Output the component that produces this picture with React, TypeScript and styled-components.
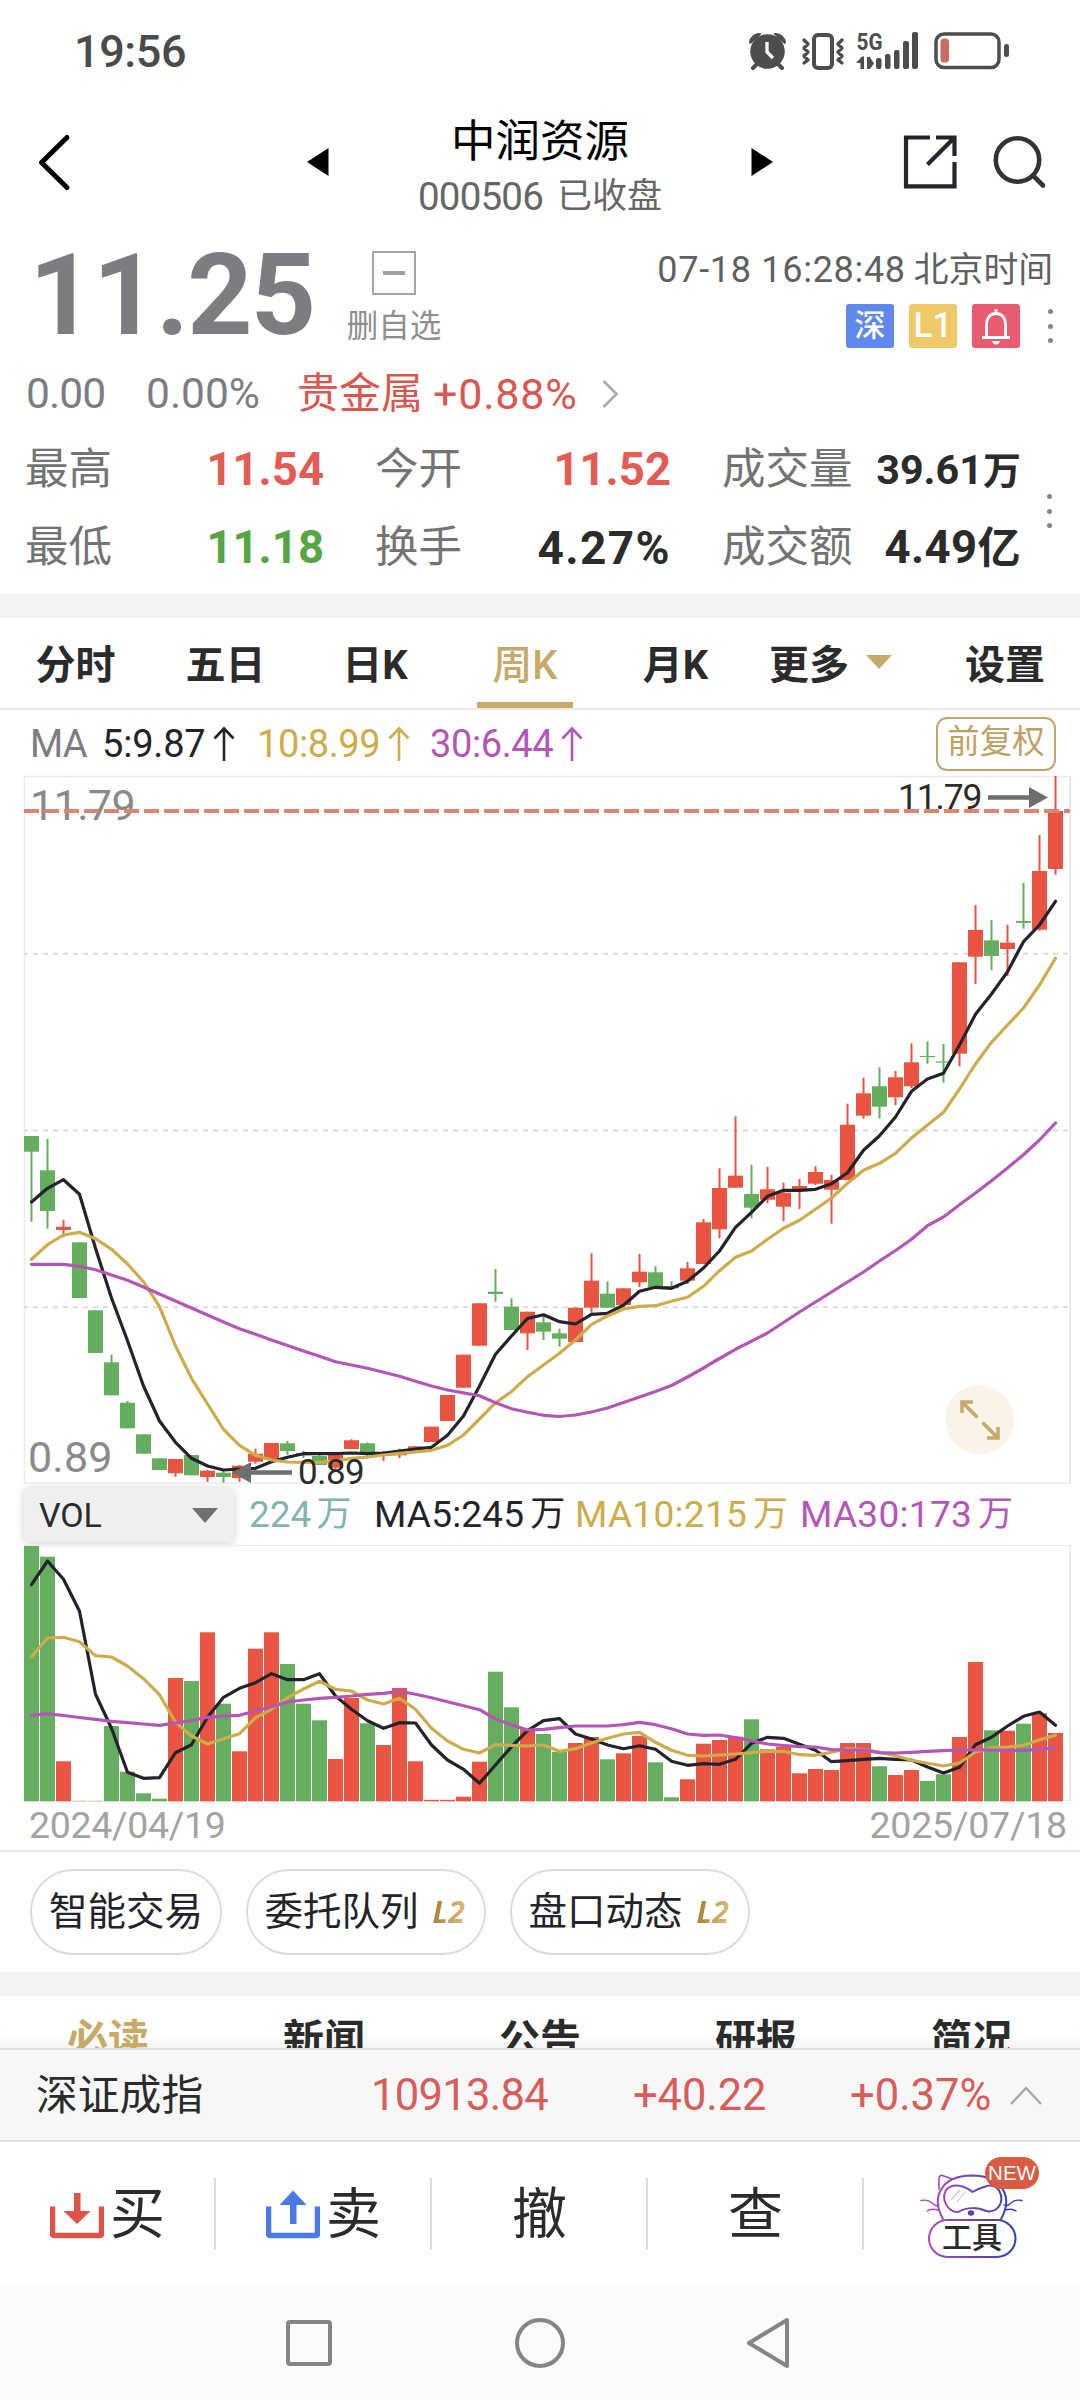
import React from "react";
import styled, { createGlobalStyle, css } from "styled-components";

const Global = createGlobalStyle`
  * { box-sizing: border-box; }
  html, body { margin: 0; padding: 0; background: #fff; }
  body { font-family: Roboto, "Noto Sans CJK SC", sans-serif; }
  svg { display: block; flex: none; }
`;

const RED = "#e95540";
const GREEN = "#65ad5f";
const INK = "#23242b";
const GOLD = "#c9a968";
const MA10 = "#ceac4c";
const MA30 = "#b456b8";

const Screen = styled.main`
  width: 1080px;
  height: 2400px;
  overflow: hidden;
  background: #fff;
  display: flex;
  flex-direction: column;
`;

type TextProps = { $s: number; $c?: string; $w?: number; $ls?: number; $ml?: number; $mt?: number; $width?: number };
const Text = styled.span<TextProps>`
  display: block;
  flex: none;
  white-space: pre;
  font-size: ${(p) => p.$s}px;
  color: ${(p) => p.$c || "#2b2b2b"};
  font-weight: ${(p) => p.$w || 400};
  letter-spacing: ${(p) => p.$ls || 0}px;
  margin-left: ${(p) => p.$ml || 0}px;
  margin-top: ${(p) => p.$mt || 0}px;
  ${(p) => p.$width && css`width: ${p.$width}px;`}
`;

/* ---------- status bar ---------- */
const StatusBar = styled.header`
  height: 102px;
  display: flex;
  justify-content: space-between;
  line-height: 103px;
  padding: 0 60px 0 74px;
`;

/* ---------- title bar ---------- */
const TitleBar = styled.nav`
  height: 126px;
  display: grid;
  grid-template-columns: 300px 480px 300px;
  align-items: stretch;
`;
const TitleSide = styled.div<{ $end?: boolean }>`
  display: flex;
  align-items: flex-start;
  justify-content: ${(p) => (p.$end ? "flex-end" : "flex-start")};
  padding: ${(p) => (p.$end ? "31px 32px 0 0" : "31px 0 0 36px")};
  gap: 34px;
`;
const TitleMid = styled.div`
  display: flex;
  justify-content: space-between;
  padding: 0 7px;
  svg { margin-top: 46px; }
`;
const TitleText = styled.div`
  display: flex;
  flex-direction: column;
  align-items: center;
  padding-top: 12px;
`;
const TitleName = styled.h1`
  margin: 0;
  font-size: 44.5px;
  line-height: 56px;
  font-weight: 400;
  color: #000;
`;
const TitleSub = styled.div`
  display: flex;
  align-items: center;
  line-height: 54px;
`;

/* ---------- quote ---------- */
const QuoteTop = styled.section`
  height: 132px;
  display: flex;
`;
const Price = styled.strong`
  width: 330px;
  padding-left: 29px;
  font-size: 114px;
  line-height: 135px;
  font-weight: 700;
  color: #7c7d82;
  letter-spacing: -1.9px;
`;
const Favorite = styled.div`
  width: 128px;
  display: flex;
  flex-direction: column;
  align-items: center;
  padding-top: 23px;
`;
const MinusBox = styled.div`
  width: 44px;
  height: 44px;
  border: 2px solid #a6a6a6;
  display: flex;
  align-items: center;
  justify-content: center;
  &::before { content: ""; width: 22px; height: 4px; background: #a0a0a0; }
`;
const QuoteRight = styled.div`
  flex: 1;
  display: flex;
  flex-direction: column;
  align-items: flex-end;
  padding: 22px 27px 0 0;
`;
const TimeRow = styled.div`
  display: flex;
  line-height: 41px;
  height: 54px;
`;
const Badges = styled.div`
  display: flex;
  align-items: center;
  gap: 15px;
`;
const Badge = styled.span<{ $bg: string; $size: number }>`
  width: 48px;
  height: 44px;
  border-radius: 3px;
  background: ${(p) => p.$bg};
  color: #fff;
  display: flex;
  align-items: center;
  justify-content: center;
  font-size: ${(p) => p.$size}px;
  line-height: 42px;
  font-weight: 500;
`;
const Dots = styled.span<{ $ml?: number }>`
  width: 5px;
  margin-left: ${(p) => p.$ml || 0}px;
  display: flex;
  flex-direction: column;
  gap: 9.5px;
  i { width: 5px; height: 5px; border-radius: 50%; background: #858585; }
`;
const ChangeRow = styled.section`
  height: 68px;
  line-height: 68px;
  display: flex;
  align-items: center;
  padding-left: 26px;
`;
const Stats = styled.section`
  height: 166px;
  display: flex;
  justify-content: space-between;
  padding: 3px 28px 0 25px;
`;
const StatGrid = styled.div`
  display: grid;
  grid-template-columns: 299px 296px 299px;
  grid-template-rows: 78px 78px;
  column-gap: 51px;
`;
const Stat = styled.div`
  display: flex;
  justify-content: space-between;
  align-items: center;
  line-height: 78px;
`;
const StatSide = styled.div`
  padding-top: 63px;
`;
const Band = styled.div`
  height: 24px;
  flex: none;
  background: #f3f3f5;
`;

/* ---------- period tabs ---------- */
const Tabs = styled.nav`
  height: 92px;
  flex: none;
  border-bottom: 2px solid #e9e9e9;
  display: grid;
  grid-template-columns: 151px 149px 150px 150px 151px 179px 150px;
`;
const Tab = styled.div<{ $active?: boolean; $start?: boolean }>`
  display: flex;
  align-items: center;
  justify-content: ${(p) => (p.$start ? "flex-start" : "center")};
  padding: 0 0 3px ${(p) => (p.$start ? 18 : 0)}px;
  gap: 17px;
  font-size: 40px;
  font-weight: ${(p) => (p.$active ? 500 : 700)};
  color: ${(p) => (p.$active ? GOLD : "#2b2b2b")};
  background: ${(p) => (p.$active ? `linear-gradient(${GOLD}, ${GOLD}) center bottom / 96px 6px no-repeat` : "none")};
`;
const DownTri = styled.i<{ $c: string; $h: number }>`
  width: 0;
  height: 0;
  border: 13px solid transparent;
  border-bottom: 0;
  border-top: ${(p) => p.$h}px solid ${(p) => p.$c};
`;

/* ---------- chart ---------- */
const MaRow = styled.div`
  height: 64px;
  flex: none;
  display: flex;
  align-items: center;
  padding: 4px 24px 0 30px;
  line-height: 60px;
`;
const MaItem = styled.div<{ $w: number }>`
  display: flex;
  align-items: center;
  width: ${(p) => p.$w}px;
  svg { margin-left: 8px; }
`;
const Adjust = styled.button`
  margin: 0 0 0 auto;
  width: 120px;
  height: 54px;
  padding: 0 0 4px;
  border: 2px solid #c3a56b;
  border-radius: 11px;
  background: #fff;
  color: #c0a065;
  font: 400 32.5px/43px Roboto, "Noto Sans CJK SC", sans-serif;
`;
const ChartWrap = styled.div`
  position: relative;
  flex: none;
  svg { overflow: visible; }
  svg text { font-family: Roboto, sans-serif; }
`;
const Expand = styled.div`
  position: absolute;
  left: 945px;
  top: 611px;
  width: 69px;
  height: 69px;
  border-radius: 50%;
  background: #faf3e8;
  display: flex;
  align-items: center;
  justify-content: center;
`;
const VolRow = styled.div`
  height: 57px;
  flex: none;
  display: flex;
  line-height: 54px;
  padding: 2px 0 0 24px;
`;
const VolSelect = styled.div`
  width: 210px;
  height: 54px;
  flex: none;
  border-radius: 5px;
  background: #efefef;
  box-shadow: 0 1px 8px rgba(0, 0, 0, 0.2);
  display: flex;
  align-items: center;
  justify-content: space-between;
  padding: 0 16px 0 15px;
  margin-right: 15px;
`;
const VolItem = styled.div<{ $w: number; $c: string }>`
  width: ${(p) => p.$w}px;
  flex: none;
  display: flex;
  color: ${(p) => p.$c};
`;
const Dates = styled.div`
  height: 49px;
  flex: none;
  border-bottom: 2px solid #ebebeb;
  display: flex;
  justify-content: space-between;
  line-height: 45px;
  padding: 0 13px 0 29px;
`;

/* ---------- shortcuts ---------- */
const Pills = styled.section`
  height: 120px;
  flex: none;
  display: flex;
  gap: 24px;
  padding: 17px 30px;
`;
const Pill = styled.button<{ $w: number }>`
  width: ${(p) => p.$w}px;
  height: 86px;
  margin: 0;
  padding: 0;
  border: 2px solid #dcdcdc;
  border-radius: 43px;
  background: #fff;
  color: ${INK};
  display: flex;
  align-items: center;
  justify-content: center;
  gap: 14px;
  font: 400 38.5px/80px Roboto, "Noto Sans CJK SC", sans-serif;
`;
const L2 = styled.em`
  font: italic 700 30px/36px "Open Sans", sans-serif;
  background: linear-gradient(100deg, #a8812f 10%, #dcc083 90%);
  -webkit-background-clip: text;
  color: transparent;
  letter-spacing: 0.5px;
  padding-right: 2px;
`;
const NewsTabs = styled.nav`
  height: 52px;
  flex: none;
  overflow: hidden;
  display: grid;
  grid-template-columns: repeat(5, 1fr);
  text-align: center;
  font-size: 41px;
  font-weight: 700;
  line-height: 89px;
  color: #2b2b2b;
  box-shadow: inset 0 -14px 14px -10px rgba(0, 0, 0, 0.06);
`;
const NewsTab = styled.span<{ $active?: boolean }>`
  color: ${(p) => (p.$active ? GOLD : "inherit")};
`;
const IndexBar = styled.section`
  height: 94px;
  flex: none;
  background: #f7f7f7;
  border-top: 2px solid #dfdfdf;
  border-bottom: 2px solid #e0e0e0;
  display: flex;
  align-items: center;
  line-height: 88px;
  padding: 2px 0 0 36px;
`;
const TradeBar = styled.nav`
  height: 144px;
  flex: none;
  display: grid;
  grid-template-columns: repeat(5, 216px);
  align-items: center;
`;
const Trade = styled.div`
  height: 72px;
  display: flex;
  align-items: center;
  justify-content: center;
  gap: 6px;
  color: #2b2b2b;
  font-size: 55px;
  line-height: 76px;
  padding-left: 1px;
  border-right: 2px solid #dedede;
  &:last-child { border: 0; height: 144px; padding-left: 16px; }
`;
const Tool = styled.div`
  position: relative;
  width: 130px;
  height: 120px;
  svg { overflow: visible; }
`;
const ToolLabel = styled.span`
  position: absolute;
  left: 13px;
  top: 65px;
  width: 88px;
  height: 39px;
  text-align: center;
  font-size: 30px;
  line-height: 38px;
  font-weight: 500;
`;
const NewBadge = styled.span`
  position: absolute;
  left: 70px;
  top: 3px;
  width: 54px;
  height: 32px;
  border-radius: 16px;
  background: #d95b42;
  color: #fff;
  text-align: center;
  font: 400 20.5px/32px "Liberation Sans", sans-serif;
`;
const SystemNav = styled.footer`
  flex: 1;
  background: #fbfbfb;
  display: flex;
  justify-content: center;
  align-items: center;
  gap: 175px;
`;

/* ---------- data ---------- */
// colour, body top, body bottom, wick top, wick bottom
type Candle = [string, number, number, number?, number?];
const candles: Candle[] = [
  ["g", 1136, 1151.7, 1136, 1222], ["g", 1170.3, 1211, 1139, 1228.7], ["r", 1226.7, 1230, 1219.7, 1237.3],
  ["g", 1242.3, 1298], ["g", 1310.3, 1353], ["g", 1362.3, 1395.3, 1354.7], ["g", 1402.7, 1428.3, 1401],
  ["g", 1434.3, 1453.7], ["g", 1458.3, 1470], ["r", 1459, 1473.3, 1459, 1476.7], ["g", 1455, 1475.3],
  ["r", 1470.7, 1477, 1470, 1481.7], ["g", 1472.7, 1477, 1470, 1482.7], ["r", 1465.7, 1478, 1465, 1481.7],
  ["r", 1453.7, 1461.7, 1448.7, 1463.7], ["r", 1443, 1459.5], ["g", 1443.3, 1451, 1441, 1454.7],
  ["g", 1453, 1455.3, 1450.7, 1458], ["g", 1456, 1465, 1453], ["r", 1454.7, 1467.7, 1452.7, 1469.3],
  ["r", 1440.3, 1449, 1439.3], ["g", 1443.3, 1454, 1442.3, 1458.5], ["r", 1453.3, 1456, 1451, 1461],
  ["r", 1452.3, 1455.3, 1448.7, 1458], ["r", 1446.3, 1449.3], ["r", 1426.7, 1442], ["r", 1395, 1421],
  ["r", 1354.7, 1387.7], ["r", 1303.3, 1345.7], ["g", 1291.7, 1294, 1269, 1302], ["g", 1306.7, 1330, 1298.3],
  ["r", 1311.7, 1333.3, 1311.7, 1350], ["g", 1322.3, 1331.7, 1316, 1340], ["g", 1333.3, 1338.7, 1328.7, 1346.7],
  ["r", 1307.7, 1342], ["r", 1280.7, 1307.7, 1253.3, 1312.7], ["g", 1293.7, 1307.7, 1281.3],
  ["r", 1288.3, 1305], ["r", 1271.7, 1282.3, 1254, 1287], ["g", 1272.3, 1287.3, 1266],
  ["g", 1286, 1288.3, 1281.3], ["r", 1268.3, 1280.7, 1262, 1284], ["r", 1222.3, 1264, 1219],
  ["r", 1188, 1229.3, 1168.3, 1238.3], ["r", 1175.7, 1187.7, 1116.3], ["g", 1194, 1207.7, 1164.7, 1218.3],
  ["r", 1189.3, 1199.7, 1167, 1203.3], ["r", 1192.7, 1206.7, 1182.7, 1221.3], ["r", 1186, 1190.7, 1179, 1209],
  ["r", 1172, 1183.7, 1166.3, 1185], ["r", 1180, 1189.7, 1175, 1223.7], ["r", 1124.7, 1180, 1103.7],
  ["r", 1093.3, 1115.7, 1077.7, 1118.7], ["g", 1086.3, 1106.7, 1067.3, 1118.7], ["r", 1077.3, 1097.3, 1071, 1105],
  ["r", 1062.3, 1086.3, 1043.3, 1088], ["g", 1055.9, 1057.1, 1041.3, 1063.7], ["g", 1061.4, 1062.6, 1044, 1082.7],
  ["r", 962.3, 1053.7, 962.3, 1066.3], ["r", 930, 956.7, 905, 984], ["g", 940.3, 956, 920, 970],
  ["r", 942.7, 949, 924.7, 976], ["g", 921, 922.9, 883, 928.7], ["r", 871, 929.7, 835, 930.7],
  ["r", 811, 869, 776, 874.7],
];
const ma5 = [1202, 1188.3, 1179.7, 1194.3, 1248.3, 1298, 1340.7, 1386, 1421, 1442.3, 1458.3, 1466, 1470, 1469, 1468.3, 1461.7, 1457.3, 1453.7, 1453.7, 1453.7, 1453, 1453.7, 1453, 1451, 1449, 1447.3, 1435.3, 1416, 1386, 1354.3, 1336, 1318.5, 1314.7, 1321.7, 1324, 1314.3, 1313.3, 1305.3, 1291.3, 1287.3, 1288.3, 1281.3, 1268, 1251, 1227.3, 1212.3, 1196.3, 1190.3, 1190.3, 1189.3, 1183.7, 1172.7, 1150.3, 1135.7, 1117, 1091.3, 1079, 1073.3, 1045, 1014.3, 994, 971.7, 941.7, 925, 901.3];
const ma10 = [1259.3, 1244.7, 1235, 1232.3, 1238.7, 1249.3, 1264, 1281.7, 1306.7, 1346, 1378.3, 1404, 1429.3, 1445.3, 1455.3, 1460, 1462, 1462.3, 1462.3, 1461, 1458.3, 1457, 1455, 1453.3, 1452, 1450.3, 1445.3, 1435, 1419, 1402.7, 1391.7, 1376.7, 1365, 1353.3, 1340, 1324.3, 1316, 1309, 1306.3, 1305.7, 1301.3, 1297.3, 1286.3, 1270.7, 1257.3, 1251, 1239.3, 1228.3, 1220.3, 1209.3, 1198, 1183.3, 1170.3, 1163.3, 1153.3, 1138, 1125, 1112.3, 1089, 1064, 1042.3, 1025, 1008, 985, 958.3];
const ma30 = [1264.3, 1264.3, 1264.3, 1266.3, 1269.7, 1275, 1280.3, 1287, 1294, 1301, 1308, 1315, 1322, 1328.7, 1334.3, 1340, 1345.5, 1351, 1356.3, 1361.7, 1365, 1368.3, 1372.2, 1376.3, 1381.3, 1386, 1390, 1392.8, 1395.7, 1402.7, 1408.7, 1412.3, 1415.3, 1416.5, 1415, 1412, 1408, 1402.5, 1397, 1391.5, 1385.5, 1377, 1368, 1358.5, 1349.3, 1341.3, 1333, 1322.5, 1312, 1302, 1292, 1282, 1272, 1261, 1250.5, 1239.3, 1225.7, 1217, 1204.7, 1193, 1180.7, 1168, 1154.7, 1140, 1123];
const volTop = [1546, 1556.7, 1761.3, 1801, 1801, 1726, 1771.7, 1793.3, 1798.7, 1678, 1681, 1632.3, 1703.7, 1751.3, 1648.7, 1632.3, 1664, 1703.7, 1720.3, 1759, 1698, 1723.3, 1745, 1688, 1761.3, 1799.8, 1799.8, 1796.7, 1761.7, 1671.7, 1707.3, 1729, 1734, 1751.7, 1743, 1737, 1759.3, 1753.3, 1736, 1762.3, 1797.3, 1779.3, 1743.7, 1740, 1736.7, 1719.3, 1749.3, 1746.7, 1773.3, 1769, 1770, 1743, 1743, 1766.3, 1775, 1770, 1781, 1774.3, 1737, 1662, 1730.3, 1730.7, 1723.7, 1713.3, 1733];
const volGreen = new Set([0, 1, 5, 6, 7, 8, 10, 12, 16, 17, 18, 21, 29, 30, 32, 33, 36, 39, 40, 45, 53, 56, 57, 60, 62]);
const vma5 = [1584.7, 1561, 1579.3, 1611.3, 1694.3, 1728.3, 1772.3, 1778.3, 1777.7, 1752.7, 1744.7, 1717.3, 1697.3, 1688.3, 1682.7, 1673.7, 1679.7, 1679.7, 1673.7, 1696, 1709.3, 1720.7, 1728.3, 1722.7, 1723, 1745, 1760, 1769.3, 1783.3, 1765, 1746.7, 1730.7, 1720.7, 1718.7, 1734, 1739, 1745, 1748.7, 1745.7, 1749.3, 1761.3, 1765.3, 1763.7, 1764.3, 1759.3, 1743.3, 1737.3, 1738.3, 1744.3, 1750.3, 1761.7, 1760.7, 1759.3, 1758.3, 1759.3, 1760, 1767, 1773, 1767.3, 1744.7, 1737.3, 1726, 1716.3, 1712, 1725.3];
const vma10 = [1656.7, 1638, 1637.3, 1641.7, 1655.7, 1657, 1666, 1678.7, 1694.7, 1722.3, 1736, 1744, 1738.7, 1733.7, 1717.7, 1709.3, 1697.7, 1689, 1681.3, 1689.3, 1691, 1700, 1704, 1698.3, 1709.3, 1728.3, 1741, 1749.3, 1753, 1744.7, 1745.3, 1746, 1745, 1751.3, 1748.7, 1743, 1738.3, 1734, 1732.3, 1742.3, 1750.3, 1755.3, 1756, 1755, 1754, 1752.7, 1751.3, 1751.3, 1754.7, 1755.3, 1752.3, 1748.7, 1749.7, 1752.3, 1755.7, 1760.3, 1763.3, 1766, 1763, 1752, 1748, 1747, 1745.3, 1739.7, 1735.3];
const vma30 = [1715.3, 1713.7, 1715.5, 1717.5, 1719.3, 1721.3, 1722.7, 1724, 1725.3, 1723, 1720.5, 1717.3, 1716, 1715.3, 1711, 1706.7, 1702, 1700, 1698.3, 1697.3, 1696, 1694.3, 1693.3, 1691.3, 1694.3, 1697.7, 1701.7, 1705.7, 1709.7, 1719, 1724.7, 1730, 1729.3, 1727.7, 1726, 1726, 1726, 1724.7, 1722.3, 1724.7, 1728.7, 1734, 1735.3, 1735, 1737.7, 1740.7, 1744, 1745.5, 1746.7, 1747, 1749.7, 1750, 1750, 1752.7, 1753, 1752.3, 1751.3, 1750.7, 1750, 1749.8, 1750, 1750.3, 1750.3, 1749.3, 1748];

const line = (ys: number[]) => ys.map((y, i) => `${31.5 + i * 16},${y}`).join(" ");

const Series = ({ a, b, c }: { a: number[]; b: number[]; c: number[] }) => (
  <g fill="none" strokeWidth={3.2} strokeLinejoin="round" strokeLinecap="round">
    <polyline points={line(a)} stroke={INK} />
    <polyline points={line(b)} stroke={MA10} />
    <polyline points={line(c)} stroke={MA30} />
  </g>
);

const CandleChart = () => (
  <svg width={1080} height={712} viewBox="0 774 1080 712">
    <path d="M24.5 776.5H1070M24.5 776V1483M24 1483H1070" stroke="#ebebeb" strokeWidth={1.5} fill="none" />
    <path d="M1070 776V1484" stroke="#ebebeb" strokeWidth={2} />
    {[953.7, 1130.5, 1307.3].map((y) => (
      <path key={y} d={`M24 ${y}H1070`} stroke="#dcdcdc" strokeWidth={2} strokeDasharray="5 5" strokeDashoffset={1} />
    ))}
    <text x={30} y={820} fontSize={43} letterSpacing={-0.6} fill="#8a8a8a">11.79</text>
    <text x={28} y={1472} fontSize={43} letterSpacing={0.2} fill="#8a8a8a">0.89</text>
    {candles.map(([k, t, b, wt, wb], i) => (
      <g key={i} fill={k === "g" ? GREEN : RED}>
        <rect x={24 + i * 16} y={t} width={15} height={b - t} />
        <rect x={30.5 + i * 16} y={wt ?? t} width={2} height={(wb ?? b) - (wt ?? t)} />
      </g>
    ))}
    <Series a={ma5} b={ma10} c={ma30} />
    <text x={898} y={809} fontSize={35.5} letterSpacing={-1.2} fill="#2b2b2b">11.79</text>
    <text x={298} y={1484} fontSize={35} letterSpacing={-0.5} fill="#2b2b2b">0.89</text>
    <path d="M988 795.3H1029V787L1048 797.5L1029 808V799.7H988Z" fill="#6e6e6e" />
    <path d="M292 1470.3H251V1462L232 1472.5L251 1483V1474.7H292Z" fill="#6e6e6e" />
    <path d="M24 811H1070" stroke="#db8470" strokeWidth={4} strokeDasharray="15 5" />
  </svg>
);

const VolumeChart = () => (
  <svg width={1080} height={260} viewBox="0 1543 1080 260">
    <path d="M24 1545.5H1070M24 1800.5H1070" stroke="#ebebeb" strokeWidth={1.2} />
    <path d="M1070 1545V1801" stroke="#ebebeb" strokeWidth={2} />
    {volTop.map((y, i) => (
      <rect key={i} x={24 + i * 16} y={y} width={15} height={Math.max(0, 1801.3 - y)} fill={volGreen.has(i) ? GREEN : RED} />
    ))}
    <Series a={vma5} b={vma10} c={vma30} />
  </svg>
);

const StatusIcons = () => (
  <svg width={276} height={102} viewBox="744 0 276 102">
    <g fill="#4d4d4d" stroke="none">
      <circle cx={767.5} cy={51.5} r={17.3} />
      <path d="M749 42a11 11 0 0 1 10-9q3 0 2 1.500L751 43.500Q749.500 45 749 42ZM786 42a11 11 0 0 0-10-9q-3 0-2 1.500L784 43.500Q785.500 45 786 42Z" />
      <rect x={876} y={58} width={5.5} height={11} rx={2} />
      <rect x={885} y={54} width={5.5} height={15} rx={2} />
      <rect x={894} y={50} width={5.5} height={19} rx={2} />
      <rect x={903} y={41} width={6} height={28} rx={2} />
      <rect x={912} y={32} width={6} height={37} rx={2} />
      <path d="M856 63L862 56.500H864V69H860.500V63ZM867 57H870V57.500L874 63.500L870 69H867Z" />
      <rect x={1004} y={44} width={5} height={13} rx={2.3} />
    </g>
    <g fill="none" stroke="#4d4d4d" strokeWidth={4} strokeLinecap="round" strokeLinejoin="round">
      <path d="M756 65L753 68M779 65L782 68" />
      <rect x={814} y={35} width={18} height={33} rx={4} />
      <path strokeWidth={3.4} d="M804 40L808 44L804 48L808 52L804 56L808 60L804 63M842 40L838 44L842 48L838 52L842 56L838 60L842 63" />
      <rect x={936} y={34} width={63} height={33.5} rx={8} strokeWidth={3.5} />
    </g>
    <path d="M767 42V52L773 58" fill="none" stroke="#fff" strokeWidth={3.3} />
    <rect x={940.5} y={38.5} width={8.5} height={24} rx={3.5} fill="#cb6a63" />
    <text x={856.5} y={49.8} fontSize={24.5} fontWeight={700} fontFamily="Roboto" fill="#4d4d4d" textLength={26} lengthAdjust="spacingAndGlyphs">5G</text>
  </svg>
);

const UpArrow = ({ c }: { c: string }) => (
  <svg width={22} height={36} viewBox="0 0 22 36" fill="none" stroke={c} strokeWidth={2.6}>
    <path d="M11 35V3M1.500 12.500L11 2.500L20.500 12.500" />
  </svg>
);

const Tray = ({ c, up }: { c: string; up?: boolean }) => (
  <svg width={54} height={50} viewBox="0 0 54 50">
    <path d="M2.500 17.500V45Q2.500 46.500 4 46.500H50Q51.500 46.500 51.500 45V17.500" fill="none" stroke={c} strokeWidth={5.5} />
    {up ? (
      <path d="M24 35V16H13.500L27 1.500L40.500 16H30.500V35Z" fill={c} />
    ) : (
      <path d="M24 4V22H13.500L27 35L40.500 22H30.500V4Z" fill={c} />
    )}
  </svg>
);

const ThreeDots = ({ ml }: { ml?: number }) => (
  <Dots $ml={ml}><i /><i /><i /></Dots>
);

export default function App() {
  return (
    <>
      <Global />
      <Screen>
        <StatusBar>
          <Text $s={45} $w={500} $c="#4a4a4a" $ls={-0.4}>19:56</Text>
          <StatusIcons />
        </StatusBar>

        <TitleBar>
          <TitleSide>
            <svg width={36} height={60} viewBox="0 0 36 60" fill="none" stroke="#000" strokeWidth={5} strokeLinecap="round" strokeLinejoin="round">
              <path d="M31 4.500L5.500 29.500L31 54.500" />
            </svg>
          </TitleSide>
          <TitleMid>
            <svg width={22} height={28} viewBox="0 0 22 28"><path d="M21.500 0V28L0 14Z" /></svg>
            <TitleText>
              <TitleName>中润资源</TitleName>
              <TitleSub>
                <Text $s={38.5} $c="#666" $ls={-0.8}>000506</Text>
                <Text $s={35} $c="#666" $ml={14}>已收盘</Text>
              </TitleSub>
            </TitleText>
            <svg width={22} height={28} viewBox="0 0 22 28"><path d="M.5 0V28L22 14Z" /></svg>
          </TitleMid>
          <TitleSide $end>
            <svg width={56} height={58} viewBox="902 133 56 58" fill="none" stroke="#23242e" strokeWidth={4.2}>
              <path d="M930 137.500H906V186.300H954.500V162M936 137.500H954.500V156M954 138L927.500 164.500" />
            </svg>
            <svg width={56} height={58} viewBox="992 133 56 58" fill="none" stroke="#333" strokeWidth={4.6} strokeLinecap="round">
              <circle cx={1017.5} cy={160} r={21.7} />
              <path d="M1033 175.500L1043 185.500" />
            </svg>
          </TitleSide>
        </TitleBar>

        <QuoteTop>
          <Price>11.25</Price>
          <Favorite>
            <MinusBox />
            <Text $s={31.5} $c="#8e8e8e" $mt={5}>删自选</Text>
          </Favorite>
          <QuoteRight>
            <TimeRow>
              <Text $s={36} $c="#606060" $ls={0.7}>07-18 16:28:48</Text>
              <Text $s={34.8} $c="#606060" $ml={8}>北京时间</Text>
            </TimeRow>
            <Badges>
              <Badge $bg="#5f88ef" $size={31}>深</Badge>
              <Badge $bg="#edc967" $size={35}>L1</Badge>
              <Badge $bg="#e75b73" $size={30}>
                <svg width={32} height={38} viewBox="0 0 32 38" fill="none" stroke="#fff" strokeWidth={2.8}>
                  <path d="M2 30.500H30M6.500 30V18C6.500 10 11 6.500 16 6.500S25.500 10 25.500 18V30M16 6V2" />
                  <path d="M12 34H20Q19 37.500 16 37.500T12 34Z" fill="#fff" stroke="none" />
                </svg>
              </Badge>
              <ThreeDots ml={13} />
            </Badges>
          </QuoteRight>
        </QuoteTop>

        <ChangeRow>
          <Text $s={42.5} $c="#7c7d82" $ls={-0.9} $width={120}>0.00</Text>
          <Text $s={42.5} $c="#7c7d82" $width={151}>0.00%</Text>
          <Text $s={42} $c="#d9574f" $width={136}>贵金属</Text>
          <Text $s={43} $c="#d9574f" $ls={0.8} $width={168}>+0.88%</Text>
          <svg width={18} height={30} viewBox="0 0 18 30" fill="none" stroke="#ababab" strokeWidth={2.6}><path d="M2.500 2L15.500 15L2.500 28" /></svg>
        </ChangeRow>

        <Stats>
          <StatGrid>
            <Stat><Text $s={43.5} $c="#737373">最高</Text><Text $s={45.5} $w={700} $c="#e45b54">11.54</Text></Stat>
            <Stat><Text $s={43.5} $c="#737373">今开</Text><Text $s={45.5} $w={700} $c="#e45b54">11.52</Text></Stat>
            <Stat><Text $s={43.5} $c="#737373">成交量</Text><Text $s={41.3} $w={700}>39.61<span style={{ fontSize: 38 }}>万</span></Text></Stat>
            <Stat><Text $s={43.5} $c="#737373">最低</Text><Text $s={45.5} $w={700} $c="#55a544">11.18</Text></Stat>
            <Stat><Text $s={43.5} $c="#737373">换手</Text><Text $s={46} $w={700} $ls={1.4}>4.27%</Text></Stat>
            <Stat><Text $s={43.5} $c="#737373">成交额</Text><Text $s={45.5} $w={700} $ls={0.4}>4.49<span style={{ fontSize: 43 }}>亿</span></Text></Stat>
          </StatGrid>
          <StatSide><ThreeDots /></StatSide>
        </Stats>
        <Band />

        <Tabs>
          <Tab>分时</Tab>
          <Tab>五日</Tab>
          <Tab>日K</Tab>
          <Tab $active>周K</Tab>
          <Tab>月K</Tab>
          <Tab $start>更多<DownTri $c={GOLD} $h={14} /></Tab>
          <Tab>设置</Tab>
        </Tabs>

        <MaRow>
          <MaItem $w={72}><Text $s={38} $c="#7c7d82" $ls={-0.8}>MA</Text></MaItem>
          <MaItem $w={155}><Text $s={38} $c={INK} $ls={-0.2}>5:9.87</Text><UpArrow c={INK} /></MaItem>
          <MaItem $w={173}><Text $s={38} $c={MA10} $ls={-0.4}>10:8.99</Text><UpArrow c={MA10} /></MaItem>
          <MaItem $w={173}><Text $s={38} $c={MA30} $ls={-0.4}>30:6.44</Text><UpArrow c={MA30} /></MaItem>
          <Adjust>前复权</Adjust>
        </MaRow>

        <ChartWrap>
          <CandleChart />
          <Expand>
            <svg width={44} height={44} viewBox="0 0 44 44" fill="none" stroke="#c9a968" strokeWidth={3.6}>
              <path d="M19.500 19.500L4 4M4 15V4H15M24.500 24.500L40 40M40 29V40H29" />
            </svg>
          </Expand>
        </ChartWrap>

        <VolRow>
          <VolSelect>
            <Text $s={34} $ls={-0.2}>VOL</Text>
            <DownTri $c="#707070" $h={15} />
          </VolSelect>
          <VolItem $w={125} $c="#7fb5b1"><Text $s={37} $c="inherit">224</Text><Text $s={35} $c="inherit" $ml={5}>万</Text></VolItem>
          <VolItem $w={201} $c={INK}><Text $s={37} $c="inherit" $ls={0.2}>MA5:245</Text><Text $s={35} $c="inherit" $ml={6}>万</Text></VolItem>
          <VolItem $w={225} $c={MA10}><Text $s={37} $c="inherit" $ls={0.3}>MA10:215</Text><Text $s={35} $c="inherit" $ml={6}>万</Text></VolItem>
          <VolItem $w={225} $c={MA30}><Text $s={37} $c="inherit" $ls={0.3}>MA30:173</Text><Text $s={35} $c="inherit" $ml={6}>万</Text></VolItem>
        </VolRow>
        <ChartWrap><VolumeChart /></ChartWrap>
        <Dates>
          <Text $s={37.5} $c="#a3a3a3" $ls={-0.3}>2024/04/19</Text>
          <Text $s={37.5} $c="#a3a3a3" $ls={-0.2}>2025/07/18</Text>
        </Dates>

        <Pills>
          <Pill $w={192}>智能交易</Pill>
          <Pill $w={240}>委托队列<L2>L2</L2></Pill>
          <Pill $w={240}>盘口动态<L2>L2</L2></Pill>
        </Pills>
        <Band />

        <NewsTabs>
          <NewsTab $active>必读</NewsTab>
          <NewsTab>新闻</NewsTab>
          <NewsTab>公告</NewsTab>
          <NewsTab>研报</NewsTab>
          <NewsTab>简况</NewsTab>
        </NewsTabs>

        <IndexBar>
          <Text $s={41.8} $width={335}>深证成指</Text>
          <Text $s={43.5} $c="#d95c58" $width={262} $ls={-0.7}>10913.84</Text>
          <Text $s={43.5} $c="#d95c58" $width={217} $ls={-0.1}>+40.22</Text>
          <Text $s={43.5} $c="#d95c58" $width={160}>+0.37%</Text>
          <svg width={32} height={20} viewBox="0 0 32 20" fill="none" stroke="#a8a8a8" strokeWidth={2.4}><path d="M1 18L16 2L31 18" /></svg>
        </IndexBar>

        <TradeBar>
          <Trade><Tray c="#df524b" />买</Trade>
          <Trade><Tray c="#487ae8" up />卖</Trade>
          <Trade>撤</Trade>
          <Trade>查</Trade>
          <Trade>
            <Tool>
              <svg width={130} height={120} viewBox="915 2154 130 120">
                <defs>
                  <linearGradient id="cat" gradientUnits="userSpaceOnUse" x1={925} y1={0} x2={1020} y2={0}>
                    <stop offset="0" stopColor="#b54bc0" />
                    <stop offset="0.5" stopColor="#6f43bd" />
                    <stop offset="1" stopColor="#2442b4" />
                  </linearGradient>
                </defs>
                <g fill="none" stroke="url(#cat)" strokeWidth={2} strokeLinecap="round" strokeLinejoin="round">
                  <path d="M943 2219C932 2200 938 2176 972 2175.500C1006 2176 1012 2200 1001 2219" />
                  <path d="M939 2189V2178Q940 2174 944 2176L952 2179" strokeWidth={1.6} />
                  <path d="M972.500 2192C965 2186 953 2182 946 2190C941 2199 947 2212 958 2212C967 2207 978 2207 986 2211C995 2213 1003 2206 1001 2195C998 2185 990 2184 984 2187Q977 2189 972.500 2192Z" />
                  <path d="M921 2200.500Q928 2199 932 2203T939 2205M927 2211Q931 2208 938 2210M1022 2200.500Q1015 2199 1011 2203T1004 2205M1016 2211Q1012 2208 1005 2210" strokeWidth={1.4} />
                  <rect x={929} y={2220} width={86.5} height={37} rx={18.5} />
                </g>
                <ellipse cx={971} cy={2213} rx={3.2} ry={2.8} fill="#5d3fbe" />
                <path d="M951 2200L960 2190M957 2202L965 2192" stroke="#c9c3f0" strokeWidth={1.2} />
              </svg>
              <ToolLabel>工具</ToolLabel>
              <NewBadge>NEW</NewBadge>
            </Tool>
          </Trade>
        </TradeBar>

        <SystemNav>
          <svg width={60} height={60} viewBox="0 0 60 60" fill="none" stroke="#858585" strokeWidth={4}>
            <rect x={9} y={9} width={42} height={42} rx={2} />
          </svg>
          <svg width={52} height={60} viewBox="0 0 52 60" fill="none" stroke="#858585" strokeWidth={4}>
            <circle cx={26} cy={30} r={23} />
          </svg>
          <svg width={60} height={60} viewBox="0 0 60 60" fill="none" stroke="#858585" strokeWidth={4} strokeLinejoin="round">
            <path d="M46 7V53L8 30Z" />
          </svg>
        </SystemNav>
      </Screen>
    </>
  );
}
